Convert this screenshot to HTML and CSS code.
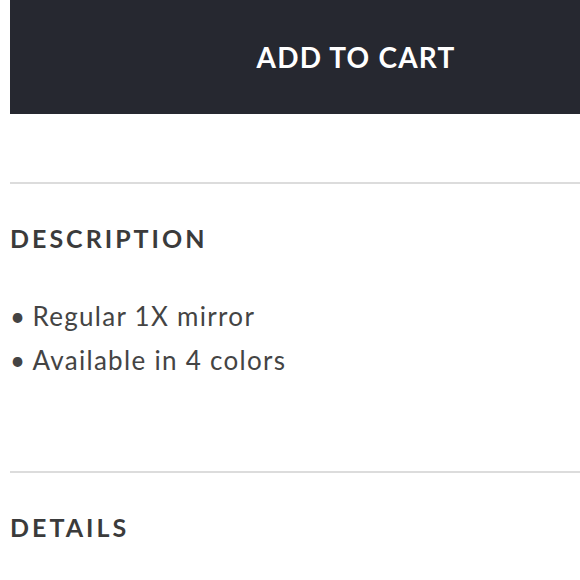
FILE: index.html
```html
<!DOCTYPE html>
<html>
<head>
<meta charset="utf-8">
<link rel="stylesheet" href="styles.css">
</head>
<body>
<div class="page">
  <button class="cart-btn">ADD TO CART</button>
  <hr class="divider first">
  <section class="section">
    <h2 class="section-title">DESCRIPTION</h2>
    <ul class="bullets">
      <li>Regular 1X mirror</li>
      <li>Available in 4 colors</li>
    </ul>
  </section>
  <hr class="divider">
  <section class="section">
    <h2 class="section-title">DETAILS</h2>
  </section>
</div>
</body>
</html>
```

FILE: styles.css
```css
html, body {
  margin: 0;
  padding: 0;
  background: #ffffff;
  overflow: hidden;
}
.page {
  width: 580px;
  height: 580px;
  padding-left: 10px;
  box-sizing: border-box;
  overflow: hidden;
  font-family: Lato, "Noto Sans", sans-serif;
}
.cart-btn {
  display: block;
  width: 692px;
  height: 114px;
  margin: 0;
  border: 0;
  background: #262830;
  color: #ffffff;
  font-family: Lato, sans-serif;
  font-weight: 700;
  font-size: 28px;
  letter-spacing: 1.2px;
  padding: 0;
  text-align: center;
}
.divider {
  border: 0;
  height: 2px;
  background: #dcdcdc;
  margin: 0;
}
.divider.first {
  margin-top: 68px;
}
.section-title {
  margin: 0;
  font-size: 25px;
  font-weight: 700;
  letter-spacing: 3px;
  color: #3b3b3b;
  padding-top: 39px;
}
.bullets {
  list-style: none;
  margin: 0;
  padding: 41px 0 0 0;
  font-size: 26px;
  color: #444444;
  line-height: 44px;
  letter-spacing: 1.3px;
  height: 177px;
}
.bullets li::before {
  content: "\2022";
  margin-right: 6px;
}
```
